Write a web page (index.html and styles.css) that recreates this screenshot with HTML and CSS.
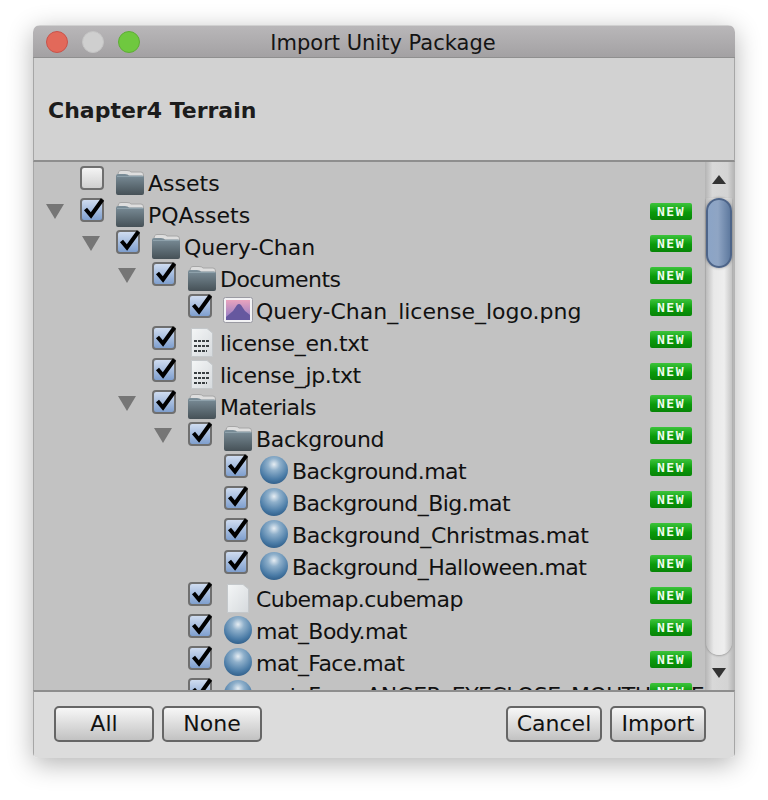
FILE: index.html
```html
<!DOCTYPE html>
<html lang="en">
<head>
  <meta charset="UTF-8">
  <title>Import Unity Package</title>
  <link rel="stylesheet" href="styles.css">
</head>
<body>
  <svg class="defs" width="0" height="0">
    <defs>
      <linearGradient id="folderFront" x1="0" y1="0" x2="0" y2="1">
        <stop offset="0" stop-color="#7c8f9a"/>
        <stop offset="1" stop-color="#465157"/>
      </linearGradient>
      <linearGradient id="sky" x1="0" y1="0" x2="0" y2="1">
        <stop offset="0" stop-color="#e9a3bd"/>
        <stop offset="1" stop-color="#8c78c6"/>
      </linearGradient>
      <linearGradient id="paper" x1="0" y1="0" x2="1" y2="1">
        <stop offset="0" stop-color="#f4f6f7"/>
        <stop offset="1" stop-color="#d6dadd"/>
      </linearGradient>
      <radialGradient id="ball" cx="0.5" cy="0.3" r="0.72">
        <stop offset="0" stop-color="#e6edf3"/>
        <stop offset="0.3" stop-color="#8fb0cb"/>
        <stop offset="0.75" stop-color="#4a7ba6"/>
        <stop offset="1" stop-color="#2f5d88"/>
      </radialGradient>
      <symbol id="i-check" viewBox="0 0 24 24">
        <path d="M4.5 12 L10 18.5 L21.5 2.5" fill="none" stroke="#000" stroke-width="4"/>
      </symbol>
      <symbol id="i-folder" viewBox="0 0 28 25">
        <path d="M2 5 Q2 0.5 5 0.5 H11 Q14 0.5 15 2 H25 Q27.5 2 27.5 5 V10 H2 Z" fill="#dedede" stroke="#a6a6a6"/>
        <path d="M0 6 Q0 4 2 4 H9 Q12 4 13 5.5 H26 Q28 5.5 28 7.5 V23 Q28 25 26 25 H2 Q0 25 0 23 Z" fill="url(#folderFront)"/>
        <path d="M1 6.5 H27" stroke="#8ea1ab" fill="none"/>
      </symbol>
      <symbol id="i-image" viewBox="0 0 30 26">
        <rect x="0.5" y="0.5" width="29" height="25" rx="2" fill="#f2f2f4" stroke="#9a9aa2"/>
        <rect x="3" y="3" width="24" height="20" fill="url(#sky)"/>
        <path d="M3 23 V20 L10 14 L14 8 Q16 6 18 8 L22 14 L27 18 V23 Z" fill="#66589f"/>
      </symbol>
      <symbol id="i-text" viewBox="0 0 22 29">
        <path d="M0.5 0.5 H16 L21.5 5 V28.5 H0.5 Z" fill="url(#paper)" stroke="#c4c8cb"/>
        <path d="M3 13 H18 M3 18 H18 M3 23 H16" stroke="#3a3f42" stroke-width="2" stroke-dasharray="3 1" fill="none"/>
      </symbol>
      <symbol id="i-blank" viewBox="0 0 22 29">
        <path d="M0.5 0.5 H16 L21.5 5 V28.5 H0.5 Z" fill="url(#paper)" stroke="#c4c8cb"/>
      </symbol>
      <symbol id="i-mat" viewBox="0 0 28 28">
        <circle cx="14" cy="14" r="14" fill="url(#ball)"/>
      </symbol>
    </defs>
  </svg>

  <div class="window">
    <div class="titlebar">
      <div class="lights">
        <span class="light red"></span>
        <span class="light grey"></span>
        <span class="light green"></span>
      </div>
      <span class="title">Import Unity Package</span>
    </div>

    <div class="header">Chapter4 Terrain</div>

    <div class="content">
      <div class="tree">
        <div class="row depth-0">
          <span class="arrow-slot"></span>
          <span class="check"></span>
          <svg class="icon folder"><use href="#i-folder"/></svg>
          <span class="name">Assets</span>
        </div>
        <div class="row depth-0">
          <span class="arrow-slot"><span class="arrow"></span></span>
          <span class="check on"><svg><use href="#i-check"/></svg></span>
          <svg class="icon folder"><use href="#i-folder"/></svg>
          <span class="name">PQAssets</span>
          <span class="badge">NEW</span>
        </div>
        <div class="row depth-1">
          <span class="arrow-slot"><span class="arrow"></span></span>
          <span class="check on"><svg><use href="#i-check"/></svg></span>
          <svg class="icon folder"><use href="#i-folder"/></svg>
          <span class="name">Query-Chan</span>
          <span class="badge">NEW</span>
        </div>
        <div class="row depth-2">
          <span class="arrow-slot"><span class="arrow"></span></span>
          <span class="check on"><svg><use href="#i-check"/></svg></span>
          <svg class="icon folder"><use href="#i-folder"/></svg>
          <span class="name tight">Documents</span>
          <span class="badge">NEW</span>
        </div>
        <div class="row depth-3">
          <span class="arrow-slot"></span>
          <span class="check on"><svg><use href="#i-check"/></svg></span>
          <svg class="icon image"><use href="#i-image"/></svg>
          <span class="name">Query-Chan_license_logo.png</span>
          <span class="badge">NEW</span>
        </div>
        <div class="row depth-2">
          <span class="arrow-slot"></span>
          <span class="check on"><svg><use href="#i-check"/></svg></span>
          <svg class="icon doc"><use href="#i-text"/></svg>
          <span class="name snug">license_en.txt</span>
          <span class="badge">NEW</span>
        </div>
        <div class="row depth-2">
          <span class="arrow-slot"></span>
          <span class="check on"><svg><use href="#i-check"/></svg></span>
          <svg class="icon doc"><use href="#i-text"/></svg>
          <span class="name snug">license_jp.txt</span>
          <span class="badge">NEW</span>
        </div>
        <div class="row depth-2">
          <span class="arrow-slot"><span class="arrow"></span></span>
          <span class="check on"><svg><use href="#i-check"/></svg></span>
          <svg class="icon folder"><use href="#i-folder"/></svg>
          <span class="name tight">Materials</span>
          <span class="badge">NEW</span>
        </div>
        <div class="row depth-3">
          <span class="arrow-slot"><span class="arrow"></span></span>
          <span class="check on"><svg><use href="#i-check"/></svg></span>
          <svg class="icon folder"><use href="#i-folder"/></svg>
          <span class="name snug">Background</span>
          <span class="badge">NEW</span>
        </div>
        <div class="row depth-4">
          <span class="arrow-slot"></span>
          <span class="check on"><svg><use href="#i-check"/></svg></span>
          <svg class="icon mat"><use href="#i-mat"/></svg>
          <span class="name tight">Background.mat</span>
          <span class="badge">NEW</span>
        </div>
        <div class="row depth-4">
          <span class="arrow-slot"></span>
          <span class="check on"><svg><use href="#i-check"/></svg></span>
          <svg class="icon mat"><use href="#i-mat"/></svg>
          <span class="name tight">Background_Big.mat</span>
          <span class="badge">NEW</span>
        </div>
        <div class="row depth-4">
          <span class="arrow-slot"></span>
          <span class="check on"><svg><use href="#i-check"/></svg></span>
          <svg class="icon mat"><use href="#i-mat"/></svg>
          <span class="name snug">Background_Christmas.mat</span>
          <span class="badge">NEW</span>
        </div>
        <div class="row depth-4">
          <span class="arrow-slot"></span>
          <span class="check on"><svg><use href="#i-check"/></svg></span>
          <svg class="icon mat"><use href="#i-mat"/></svg>
          <span class="name tight">Background_Halloween.mat</span>
          <span class="badge">NEW</span>
        </div>
        <div class="row depth-3">
          <span class="arrow-slot"></span>
          <span class="check on"><svg><use href="#i-check"/></svg></span>
          <svg class="icon doc"><use href="#i-blank"/></svg>
          <span class="name tight">Cubemap.cubemap</span>
          <span class="badge">NEW</span>
        </div>
        <div class="row depth-3">
          <span class="arrow-slot"></span>
          <span class="check on"><svg><use href="#i-check"/></svg></span>
          <svg class="icon mat"><use href="#i-mat"/></svg>
          <span class="name tight">mat_Body.mat</span>
          <span class="badge">NEW</span>
        </div>
        <div class="row depth-3">
          <span class="arrow-slot"></span>
          <span class="check on"><svg><use href="#i-check"/></svg></span>
          <svg class="icon mat"><use href="#i-mat"/></svg>
          <span class="name tight">mat_Face.mat</span>
          <span class="badge">NEW</span>
        </div>
        <div class="row depth-3">
          <span class="arrow-slot"></span>
          <span class="check on"><svg><use href="#i-check"/></svg></span>
          <svg class="icon mat"><use href="#i-mat"/></svg>
          <span class="name tight">mat_Face_ANGER_EYECLOSE_MOUTH_OPEN.mat</span>
          <span class="badge">NEW</span>
        </div>
      </div>

      <div class="scrollbar">
        <span class="tri up"></span>
        <div class="track">
          <div class="thumb"></div>
        </div>
        <span class="tri down"></span>
      </div>
    </div>

    <div class="footer">
      <button class="btn wide">All</button>
      <button class="btn wide">None</button>
      <span class="spacer"></span>
      <button class="btn">Cancel</button>
      <button class="btn">Import</button>
    </div>
  </div>
</body>
</html>
```

FILE: styles.css
```css
html, body {
  margin: 0;
  height: 100%;
}
body {
  background: #fff;
  padding: 25px 33px 0;
  box-sizing: border-box;
  font-family: "DejaVu Sans", "Liberation Sans", sans-serif;
  color: #111;
}
.defs {
  position: absolute;
}
.window {
  width: 702px;
  height: 733px;
  display: flex;
  flex-direction: column;
  border-radius: 7px 7px 5px 5px;
  overflow: hidden;
  box-shadow: 0 6px 26px rgba(0, 0, 0, 0.3);
}

/* title bar */
.titlebar {
  height: 31px;
  flex: none;
  display: flex;
  align-items: center;
  justify-content: center;
  position: relative;
  background: linear-gradient(#b9b7b9, #a3a1a3);
  border-top: 1px solid #d0d0d0;
  border-bottom: 1px solid #8f8f8f;
}
.lights {
  position: absolute;
  left: 13px;
  top: 5px;
  display: flex;
  gap: 14px;
}
.light {
  width: 22px;
  height: 22px;
  border-radius: 50%;
  box-sizing: border-box;
}
.red {
  background: #e2695a;
  border: 1px solid #c9524a;
}
.grey {
  background: #cfcfcf;
  border: 1px solid #c4c4c4;
}
.green {
  background: #6fc83f;
  border: 1px solid #5eae36;
}
.title {
  font-size: 21px;
  color: #141414;
  padding: 2px 2px 0 0;
}

/* package name */
.header {
  height: 104px;
  flex: none;
  box-sizing: border-box;
  display: flex;
  align-items: center;
  padding: 2px 0 0 14px;
  background: #d2d2d2;
  border-bottom: 2px solid #8e8e8e;
  font-size: 22px;
  font-weight: bold;
  color: #1c1c1c;
  border-left: 1px solid #a6a6a6;
  border-right: 1px solid #a6a6a6;
}

/* tree */
.content {
  flex: 1;
  min-height: 0;
  display: flex;
  background: #c2c2c2;
  border-left: 1px solid #a6a6a6;
}
.tree {
  flex: 1;
  min-width: 0;
  overflow: hidden;
  padding-top: 4px;
}
.row {
  height: 32px;
  display: flex;
  align-items: flex-start;
  position: relative;
}
.depth-0 { padding-left: 12px; }
.depth-1 { padding-left: 48px; }
.depth-2 { padding-left: 84px; }
.depth-3 { padding-left: 120px; }
.depth-4 { padding-left: 156px; }

.arrow-slot {
  width: 34px;
  flex: none;
  padding-top: 6px;
  box-sizing: border-box;
}
.arrow {
  display: block;
  width: 0;
  height: 0;
  border-left: 9px solid transparent;
  border-right: 9px solid transparent;
  border-top: 15px solid #767676;
}
.check {
  width: 24px;
  height: 24px;
  flex: none;
  box-sizing: border-box;
  border: 2px solid #6f6f6f;
  border-radius: 4px;
  background: linear-gradient(#f4f4f4, #cfcfcf);
  position: relative;
}
.check.on {
  background: linear-gradient(#cfdcf0, #7f9fce);
}
.check svg {
  position: absolute;
  left: -1px;
  top: -3px;
  width: 24px;
  height: 24px;
}
.icon {
  flex: none;
}
.folder {
  width: 28px;
  height: 25px;
  margin: 4px 4px 0 12px;
}
.image {
  width: 30px;
  height: 26px;
  margin: 3px 3px 0 11px;
}
.doc {
  width: 22px;
  height: 29px;
  margin: 2px 7px 0 15px;
}
.mat {
  width: 28px;
  height: 28px;
  margin: 2px 4px 0 12px;
}
.name {
  font-size: 22px;
  line-height: 32px;
  margin-top: 2px;
  color: #111;
  white-space: nowrap;
}
.name.snug {
  letter-spacing: -0.3px;
}
.name.tight {
  letter-spacing: -0.55px;
}
.badge {
  position: absolute;
  left: 616px;
  top: 5px;
  width: 42px;
  height: 17px;
  border-radius: 2px;
  background: linear-gradient(#3cc43c, #0a9a0a 55%, #078407);
  color: #eefbee;
  font-family: "DejaVu Sans Mono", monospace;
  font-size: 13px;
  font-weight: bold;
  line-height: 17px;
  text-align: center;
  letter-spacing: 1.5px;
}

/* scrollbar */
.scrollbar {
  width: 30px;
  flex: none;
  display: flex;
  flex-direction: column;
  align-items: flex-start;
  background: linear-gradient(90deg, #b4b4b4, #d8d8d8 25%, #d4d4d4 75%, #b2b2b2);
  box-sizing: border-box;
}
.tri {
  flex: none;
  width: 0;
  height: 0;
  margin-left: 7px;
  border-left: 7px solid transparent;
  border-right: 7px solid transparent;
}
.tri.up {
  margin-top: 13px;
  margin-bottom: 14px;
  border-bottom: 9px solid #333;
}
.tri.down {
  margin-top: 13px;
  margin-bottom: 12px;
  border-top: 10px solid #333;
}
.track {
  flex: 1;
  width: 26px;
  margin-left: 1px;
  border-radius: 0 0 13px 13px;
  background: linear-gradient(90deg, #bcbcbc, #e9e9e9 30%, #eeeeee 70%, #c4c4c4);
  box-shadow: 0 1px 2px rgba(0, 0, 0, 0.25);
}
.thumb {
  height: 70px;
  border-radius: 13px;
  box-sizing: border-box;
  border: 2px solid #4d6488;
  background: linear-gradient(90deg, #8ba4c6, #8fa5c4 45%, #5f7a9f);
  box-shadow: 0 0 3px rgba(0, 0, 0, 0.35);
}

/* buttons */
.footer {
  height: 68px;
  flex: none;
  display: flex;
  align-items: flex-start;
  gap: 8px;
  padding: 14px 28px 0 20px;
  box-sizing: border-box;
  background: #dcdcdc;
  border-top: 2px solid #8e8e8e;
  border-left: 1px solid #a6a6a6;
  border-right: 1px solid #a6a6a6;
}
.spacer {
  flex: 1;
}
.btn {
  width: 96px;
  height: 36px;
  padding: 0 0 2px;
  box-sizing: border-box;
  border: 2px solid #666;
  border-radius: 5px;
  background: linear-gradient(#f7f7f7, #c2c2c2);
  font-family: inherit;
  font-size: 22px;
  color: #111;
}
.btn.wide {
  width: 100px;
}
```
